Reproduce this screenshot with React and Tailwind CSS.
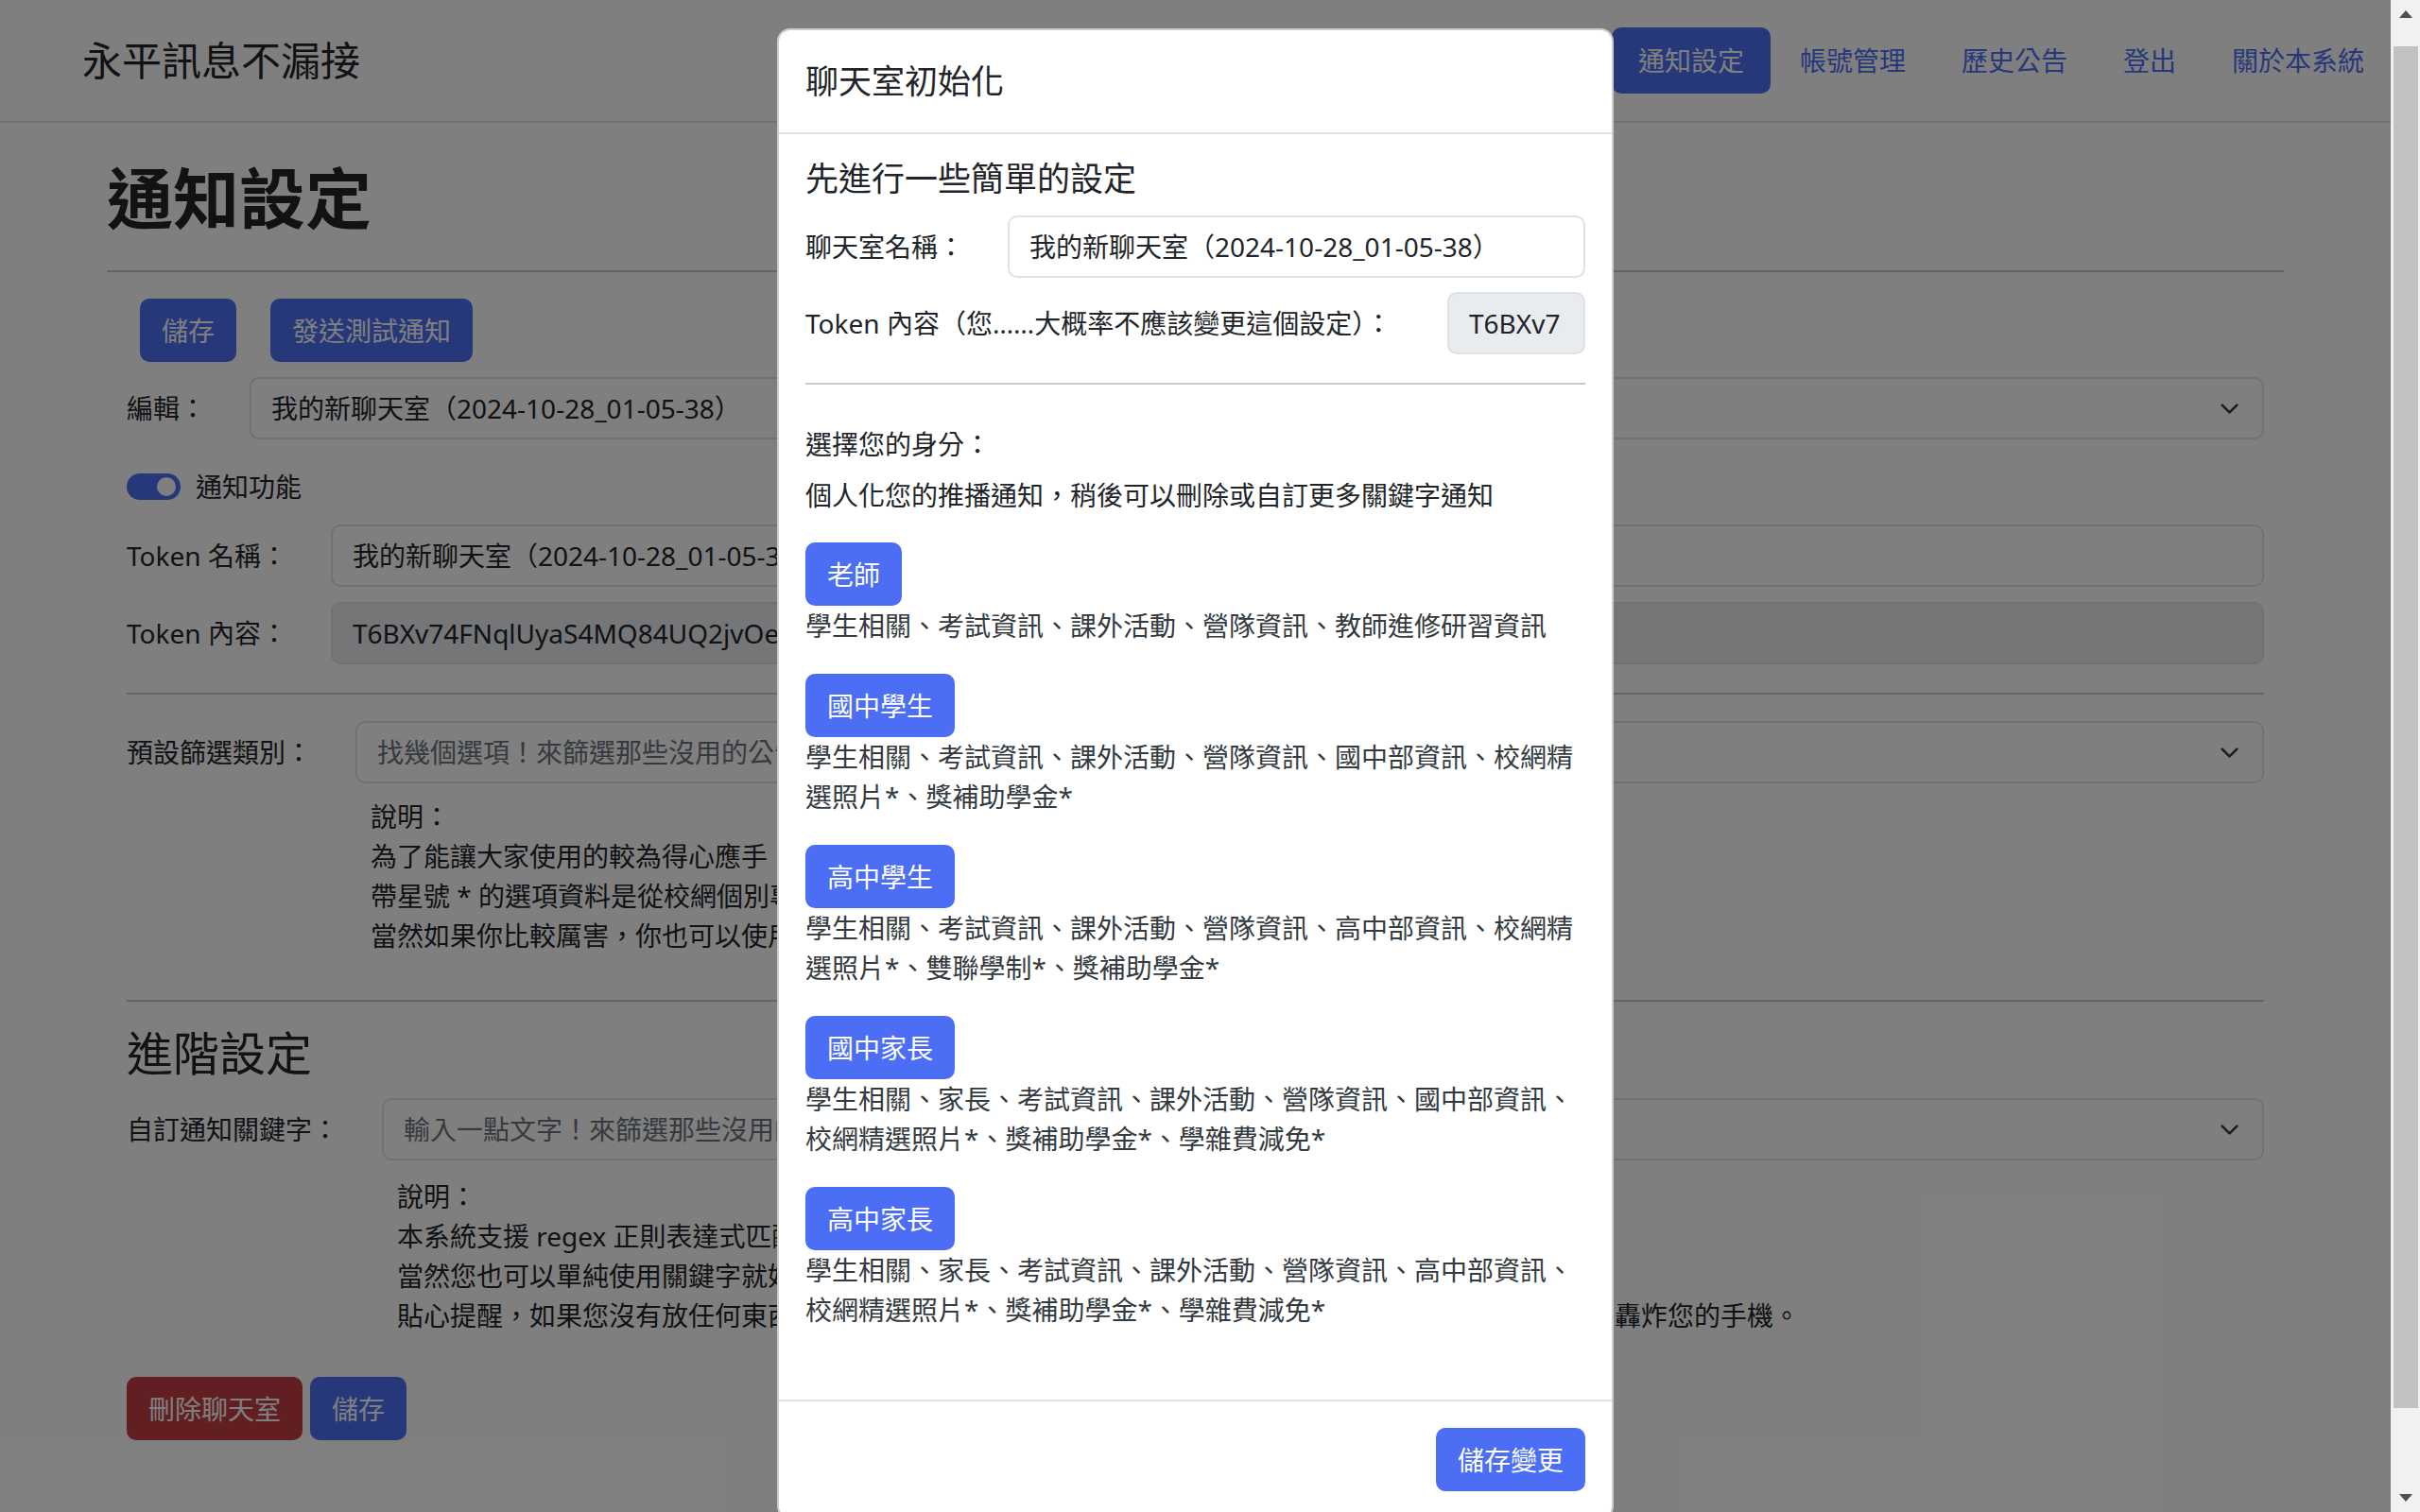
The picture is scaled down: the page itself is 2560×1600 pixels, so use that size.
import React from 'react';

const roles = [
  { name: '老師', desc: '學生相關、考試資訊、課外活動、營隊資訊、教師進修研習資訊' },
  { name: '國中學生', desc: '學生相關、考試資訊、課外活動、營隊資訊、國中部資訊、校網精選照片*、獎補助學金*' },
  { name: '高中學生', desc: '學生相關、考試資訊、課外活動、營隊資訊、高中部資訊、校網精選照片*、雙聯學制*、獎補助學金*' },
  { name: '國中家長', desc: '學生相關、家長、考試資訊、課外活動、營隊資訊、國中部資訊、校網精選照片*、獎補助學金*、學雜費減免*' },
  { name: '高中家長', desc: '學生相關、家長、考試資訊、課外活動、營隊資訊、高中部資訊、校網精選照片*、獎補助學金*、學雜費減免*' },
];

const navItems = ['通知設定', '帳號管理', '歷史公告', '登出', '關於本系統'];

const TOKEN = 'T6BXv74FNqlUyaS4MQ84UQ2jvOe8hXk3LqW1ZpR9tYcM2nGd5sVbJ0';

export default function App() {
  return (
    <div className="flex h-[1600px] w-[2560px] overflow-hidden bg-white font-['Noto_Sans','Noto_Sans_CJK_TC',sans-serif] text-[#212529]">
      <div className="relative h-[1600px] w-[2529px] shrink-0 overflow-hidden bg-white">
        <Page />
        {/* backdrop */}
        <div className="absolute inset-0 bg-black/50" />
        <Modal />
      </div>
      <Scrollbar />
    </div>
  );
}

function Page() {
  return (
    <div>
      <nav className="flex h-[130px] items-center justify-between border-b-2 border-[#dee2e6] pl-[87px]">
        <span className="text-[42px] leading-none">永平訊息不漏接</span>
        <ul className="flex gap-[3px]">
          {navItems.map((item, i) => (
            <li
              key={item}
              className={`rounded-[10px] px-[28px] py-[14px] text-[28px] leading-[42px] ${
                i === 0 ? 'bg-[#4c6ef5] text-white' : 'text-[#4c6ef5]'
              }`}
            >
              {item}
            </li>
          ))}
        </ul>
      </nav>

      <main className="mx-[113px]">
        <h1 className="mt-[38px] text-[70px] font-bold leading-[84px]">通知設定</h1>
        <hr className="mt-[34px] border-0 border-t-2 border-[#c8c9ca]" />

        <div className="px-[21px]">
          <div className="ml-[14px] mt-[28px] flex gap-[36px]">
            <Btn>儲存</Btn>
            <Btn>發送測試通知</Btn>
          </div>

          <Row label="編輯：" className="mt-[16px]">
            <Field select>我的新聊天室（2024-10-28_01-05-38）</Field>
          </Row>

          <div className="mt-[29px] flex items-center gap-[16px]">
            <div className="flex h-[28px] w-[57px] items-center justify-end rounded-full bg-[#4c6ef5] pr-[5px]">
              <div className="h-[20px] w-[20px] rounded-full bg-white" />
            </div>
            <span className="text-[28px] leading-[42px]">通知功能</span>
          </div>

          <Row label="Token 名稱：" className="mt-[19px]">
            <Field>我的新聊天室（2024-10-28_01-05-38）</Field>
          </Row>
          <Row label="Token 內容：" className="mt-[16px]">
            <Field disabled>{TOKEN}</Field>
          </Row>

          <hr className="mt-[30px] border-0 border-t-2 border-[#c8c9ca]" />

          <Row label="預設篩選類別：" className="mt-[28px]">
            <Field select placeholder>找幾個選項！來篩選那些沒用的公告吧</Field>
          </Row>
          <div className="ml-[258px] mt-[14px] text-[28px] leading-[42px]">
            <p>說明：</p>
            <p>為了能讓大家使用的較為得心應手，我們預先整理了幾個常用的類別供您選擇。</p>
            <p>帶星號 * 的選項資料是從校網個別專區取得，可能會有些許延遲。</p>
            <p>當然如果你比較厲害，你也可以使用下方的進階設定來自訂關鍵字。</p>
          </div>

          <hr className="mt-[47px] border-0 border-t-2 border-[#c8c9ca]" />

          <h3 className="mt-[25px] text-[49px] leading-[59px]">進階設定</h3>

          <Row label="自訂通知關鍵字：" className="mt-[18px]">
            <Field select placeholder>輸入一點文字！來篩選那些沒用的公告吧</Field>
          </Row>
          <div className="ml-[286px] mt-[17px] whitespace-nowrap text-[28px] leading-[42px]">
            <p>說明：</p>
            <p>本系統支援 regex 正則表達式匹配，詳細語法請參考相關文件。</p>
            <p>當然您也可以單純使用關鍵字就好，例如：段考、畢業典禮。</p>
            <p>貼心提醒，如果您沒有放任何東西，系統將會直接推播所有的公告給您，也就是說我們會用大量的通知來轟炸您的手機。</p>
          </div>

          <div className="mt-[44px] flex gap-[8px]">
            <Btn color="bg-[#c43e44]">刪除聊天室</Btn>
            <Btn>儲存</Btn>
          </div>
        </div>
      </main>
    </div>
  );
}

function Modal() {
  return (
    <div className="absolute left-[822px] top-[30px] w-[885px] rounded-[14px] border-2 border-black/20 bg-white">
      <div className="flex h-[110px] items-center border-b-2 border-[#dee2e6] px-[28px]">
        <h5 className="text-[35px] leading-[52px]">聊天室初始化</h5>
      </div>

      <div className="px-[28px] pb-[74px] pt-[26px]">
        <h5 className="text-[35px] leading-[42px]">先進行一些簡單的設定</h5>

        <Row label="聊天室名稱：" className="mt-[18px]">
          <Field>我的新聊天室（2024-10-28_01-05-38）</Field>
        </Row>

        <div className="mt-[15px] flex items-center justify-between">
          <span className="whitespace-nowrap text-[28px] leading-[42px]">Token 內容（您……大概率不應該變更這個設定）：</span>
          <Field disabled className="w-[146px] shrink-0">{TOKEN}</Field>
        </div>

        <hr className="mt-[30px] border-0 border-t-2 border-[#c8c9ca]" />

        <p className="mt-[42px] text-[28px] leading-[42px]">選擇您的身分：</p>
        <p className="mt-[12px] text-[28px] leading-[42px]">個人化您的推播通知，稍後可以刪除或自訂更多關鍵字通知</p>

        <div className="mt-[-1px]">
          {roles.map((r) => (
            <div key={r.name} className="mt-[30px]">
              <Btn color="bg-[#4c6ef5]">{r.name}</Btn>
              <p className="text-[28px] leading-[42px] text-[#333a40]">{r.desc}</p>
            </div>
          ))}
        </div>
      </div>

      <div className="flex justify-end border-t-2 border-[#dee2e6] px-[28px] pb-[28px] pt-[28px]">
        <Btn>儲存變更</Btn>
      </div>
    </div>
  );
}

function Row({ label, className = '', children }) {
  return (
    <div className={`flex items-center gap-[46px] ${className}`}>
      <span className="shrink-0 whitespace-nowrap text-[28px] leading-[42px]">{label}</span>
      <div className="min-w-0 flex-1">{children}</div>
    </div>
  );
}

function Field({ children, disabled, placeholder, select, className = '' }) {
  return (
    <div
      className={`flex h-[66px] items-center overflow-hidden whitespace-nowrap rounded-[10px] border-2 border-[#dee2e6] pl-[21px] pr-[24px] ${
        disabled ? 'bg-[#e9ecef]' : 'bg-white'
      } ${className}`}
    >
      <span className={`min-w-0 flex-1 overflow-hidden text-[28px] leading-[42px] ${placeholder ? 'text-[#6c757d]' : 'text-[#212529]'}`}>
        {children}
      </span>
      {select && (
        <svg width="21" height="21" viewBox="0 0 16 16" className="shrink-0">
          <path d="m2 5 6 6 6-6" fill="none" stroke="#343a40" strokeWidth="2" strokeLinecap="round" strokeLinejoin="round" />
        </svg>
      )}
    </div>
  );
}

function Btn({ children, color = 'bg-[#4c6ef5]' }) {
  return (
    <button className={`flex h-[67px] items-center rounded-[10px] px-[23px] text-[28px] leading-[42px] text-white ${color}`}>
      {children}
    </button>
  );
}

function Scrollbar() {
  return (
    <div className="flex h-[1600px] w-[31px] shrink-0 flex-col bg-[#f1f1f1]">
      <div className="flex h-[30px] items-center justify-center">
        <svg width="14" height="8" viewBox="0 0 14 8"><path d="M7 0 14 8H0z" fill="#505050" /></svg>
      </div>
      <div className="ml-[3px] mt-[19px] h-[1441px] w-[26px] bg-[#c1c1c1]" />
      <div className="flex-1" />
      <div className="flex h-[30px] items-center justify-center">
        <svg width="14" height="8" viewBox="0 0 14 8"><path d="M0 0h14L7 8z" fill="#505050" /></svg>
      </div>
    </div>
  );
}
